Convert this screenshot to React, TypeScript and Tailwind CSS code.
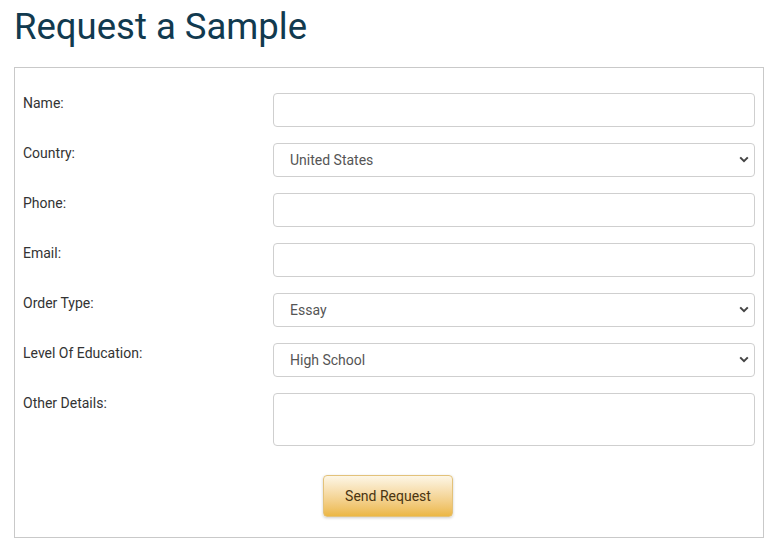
import React from 'react';

const labelCls = 'w-[250px] shrink-0 pt-0 text-[14px] leading-[20px] text-[#333]';
const inputCls =
    'block w-[482px] h-[34px] rounded-[4px] border border-[#cfcfcf] bg-white px-4 pt-[1px] text-[14px] text-[#555] outline-none';

function Chevron() {
    return (
        <svg
            className="pointer-events-none absolute right-[6px] top-[13px]"
            width="10"
            height="7"
            viewBox="0 0 10 7"
        >
            <path d="M1.2 1.4 L5 5.2 L8.8 1.4" fill="none" stroke="#444" strokeWidth="2" />
        </svg>
    );
}

function SelectField({ value, options }: { value: string; options: string[] }) {
    return (
        <div className="relative w-[482px]">
            <select defaultValue={value} className={inputCls + ' appearance-none'}>
                {options.map((o) => (
                    <option key={o}>{o}</option>
                ))}
            </select>
            <Chevron />
        </div>
    );
}

function Row({ label, children }: { label: string; children: React.ReactNode }) {
    return (
        <div className="flex">
            <div className={labelCls}>{label}</div>
            {children}
        </div>
    );
}

export default function App() {
    return (
        <div className="w-[778px] h-[549px] bg-white font-['Roboto',sans-serif]">
            <h1 className="pl-[14px] pt-[3px] h-[67px] text-[36.5px] leading-[48px] text-[#113a4f]">
                Request a Sample
            </h1>
            <div className="ml-[14px] w-[750px] h-[471px] border border-[#c9c9c9] pl-[8px] pt-[25px]">
                <form className="flex flex-col gap-4" onSubmit={(e) => e.preventDefault()}>
                    <Row label="Name:">
                        <input type="text" className={inputCls} />
                    </Row>
                    <Row label="Country:">
                        <SelectField value="United States" options={['United States', 'Canada', 'United Kingdom']} />
                    </Row>
                    <Row label="Phone:">
                        <input type="text" className={inputCls} />
                    </Row>
                    <Row label="Email:">
                        <input type="text" className={inputCls} />
                    </Row>
                    <Row label="Order Type:">
                        <SelectField value="Essay" options={['Essay', 'Research Paper', 'Term Paper']} />
                    </Row>
                    <Row label="Level Of Education:">
                        <SelectField value="High School" options={['High School', 'College', 'University']} />
                    </Row>
                    <Row label="Other Details:">
                        <textarea className={inputCls + ' h-[53px] resize-none py-2'} />
                    </Row>
                </form>
                <div className="pl-[300px] pt-[29px]">
                    <button
                        type="button"
                        className="w-[130px] h-[42px] rounded-[4px] border border-[#e3c27a] bg-gradient-to-b from-[#fdf6e6] to-[#ecb743] text-[14px] text-[#4a3411] shadow-[0_1px_3px_rgba(0,0,0,0.2)]"
                    >
                        Send Request
                    </button>
                </div>
            </div>
        </div>
    );
}
